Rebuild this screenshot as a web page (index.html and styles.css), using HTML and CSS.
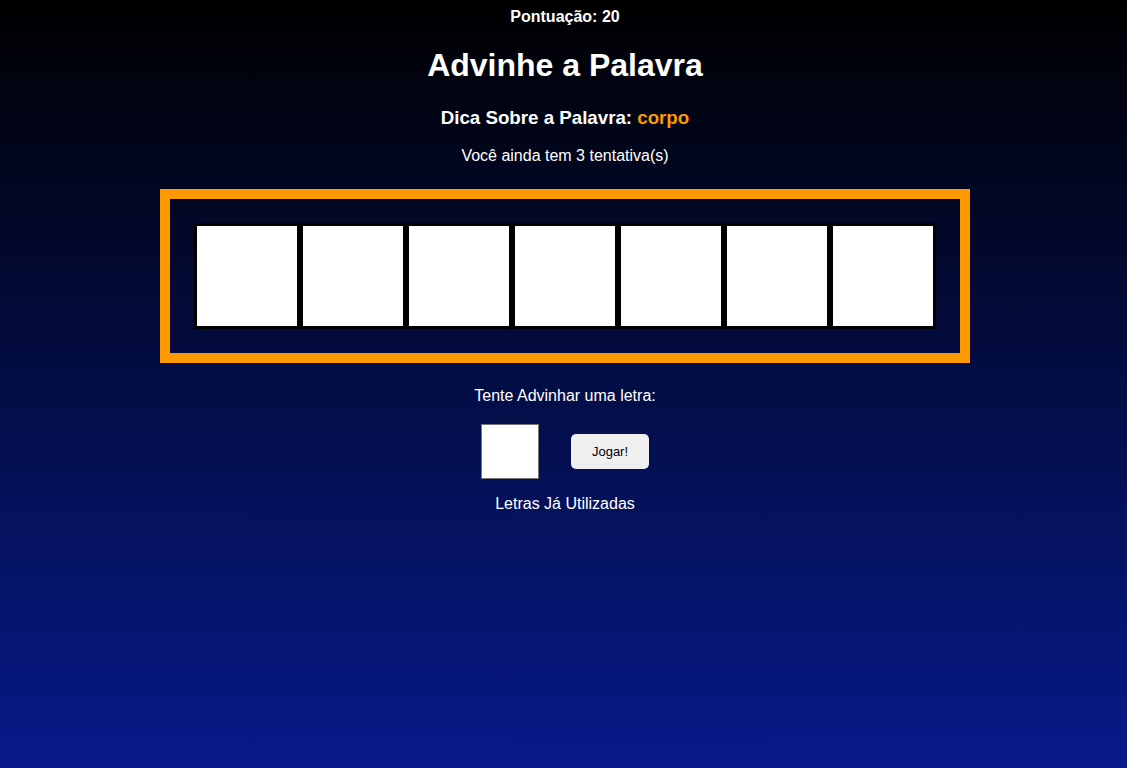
FILE: index.html
```html
<!DOCTYPE html>
<html lang="pt">
<head>
<meta charset="utf-8">
<title>Advinhe a Palavra</title>
<link rel="stylesheet" href="styles.css">
</head>
<body>
<main class="game">
  <div class="score">Pontuação: 20</div>
  <h1 class="title">Advinhe a Palavra</h1>
  <h2 class="hint">Dica Sobre a Palavra: <span class="hint-word">corpo</span></h2>
  <p class="tries">Você ainda tem 3 tentativa(s)</p>
  <section class="board">
    <div class="tile"></div>
    <div class="tile"></div>
    <div class="tile"></div>
    <div class="tile"></div>
    <div class="tile"></div>
    <div class="tile"></div>
    <div class="tile"></div>
  </section>
  <p class="prompt">Tente Advinhar uma letra:</p>
  <div class="guess-row">
    <input class="letter-input" type="text" maxlength="1">
    <button class="play-btn">Jogar!</button>
  </div>
  <p class="used">Letras Já Utilizadas</p>
</main>
</body>
</html>
```
FILE: styles.css
```css
html, body {
  margin: 0;
  padding: 0;
  height: 100%;
}
body {
  background: linear-gradient(to bottom, #000000 0%, #071a8a 100%);
  background-attachment: fixed;
  color: #ffffff;
  font-family: "Liberation Sans", Arial, sans-serif;
  padding-left: 3px;
  box-sizing: border-box;
  min-height: 768px;
}
.game {
  display: flex;
  flex-direction: column;
  align-items: center;
}
.score {
  margin-top: 8px;
  font-size: 16px;
  font-weight: bold;
  line-height: 18px;
}
.title {
  margin: 21px 0 0;
  font-size: 32px;
  line-height: 37px;
  font-weight: bold;
}
.hint {
  margin: 23px 0 0;
  font-size: 18.72px;
  line-height: 21px;
  font-weight: bold;
}
.hint-word {
  color: #ff9900;
}
.tries {
  margin: 19px 0 0;
  font-size: 16px;
  line-height: 18px;
}
.board {
  margin-top: 24px;
  display: flex;
  border: 10px solid #ff9900;
  padding: 24px;
  width: 742px;
}
.tile {
  width: 100px;
  height: 100px;
  background: #ffffff;
  border: 3px solid #000000;
}
.prompt {
  margin: 24px 0 0;
  font-size: 16px;
  line-height: 18px;
}
.guess-row {
  margin-top: 19px;
  display: flex;
  align-items: center;
  gap: 32px;
}
.letter-input {
  box-sizing: border-box;
  width: 58px;
  height: 55px;
  margin: 0;
  border: 1px solid #767676;
  background: #ffffff;
  padding: 0;
  font-size: 24px;
  text-align: center;
}
.play-btn {
  box-sizing: border-box;
  width: 78px;
  height: 35px;
  border: none;
  border-radius: 5px;
  background: #efefef;
  color: #000000;
  font-family: "Liberation Sans", Arial, sans-serif;
  font-size: 13px;
  padding: 0;
}
.used {
  margin: 16px 0 0;
  font-size: 16px;
  line-height: 18px;
}
```
